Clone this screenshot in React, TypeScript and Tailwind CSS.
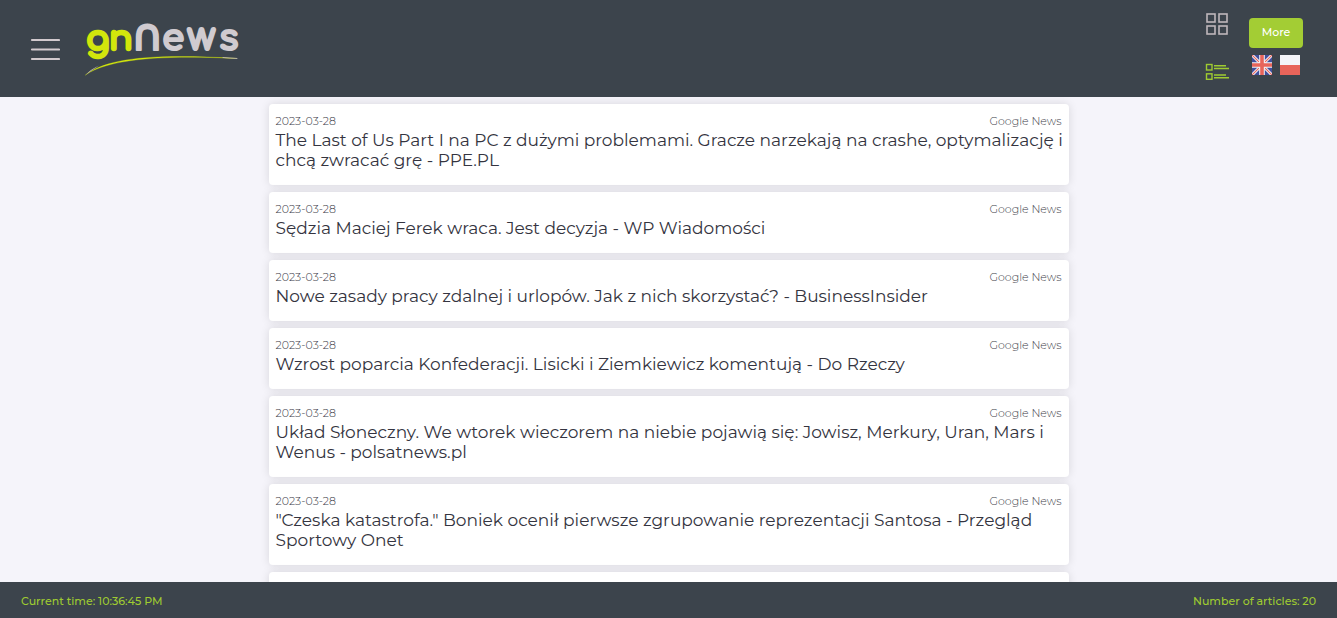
type Article = { date: string; title: string; source: string };

const articles: Article[] = [
  { date: "2023-03-28", source: "Google News", title: "The Last of Us Part I na PC z dużymi problemami. Gracze narzekają na crashe, optymalizację i chcą zwracać grę - PPE.PL" },
  { date: "2023-03-28", source: "Google News", title: "Sędzia Maciej Ferek wraca. Jest decyzja - WP Wiadomości" },
  { date: "2023-03-28", source: "Google News", title: "Nowe zasady pracy zdalnej i urlopów. Jak z nich skorzystać? - BusinessInsider" },
  { date: "2023-03-28", source: "Google News", title: "Wzrost poparcia Konfederacji. Lisicki i Ziemkiewicz komentują - Do Rzeczy" },
  { date: "2023-03-28", source: "Google News", title: "Układ Słoneczny. We wtorek wieczorem na niebie pojawią się: Jowisz, Merkury, Uran, Mars i Wenus - polsatnews.pl" },
  { date: "2023-03-28", source: "Google News", title: "\"Czeska katastrofa.\" Boniek ocenił pierwsze zgrupowanie reprezentacji Santosa - Przegląd Sportowy Onet" },
];

function MenuIcon() {
  return (
    <svg width="30" height="24" viewBox="0 0 30 24" fill="none" stroke="#d2cace" strokeWidth="2.2" strokeLinecap="round" aria-hidden="true">
      <path d="M2 2h27M2 11.5h27M2 21h27" />
    </svg>
  );
}

function Logo() {
  return (
    <svg width="156" height="77" viewBox="0 0 156 77" role="img" aria-label="gnNews" strokeLinejoin="round" strokeLinecap="round">
      <g fontFamily="Comfortaa, Montserrat, Inter, sans-serif" fontWeight="600">
        <g fill="#d2e60c" stroke="#d2e60c" strokeWidth="2.6">
          <text x="1" y="42" fontSize="35">g</text>
          <text x="24" y="42" fontSize="35">n</text>
        </g>
        <g fill="#d0cbd0" stroke="#d0cbd0" strokeWidth="2.2">
          <text x="46" y="42" fontSize="44" fontFamily="'DejaVu Sans', sans-serif" fontWeight="400">∩</text>
          <text x="77" y="42" fontSize="36">e</text>
          <text x="102" y="42" fontSize="39">w</text>
          <text x="134" y="42" fontSize="36">s</text>
        </g>
      </g>
      <path d="M0.5 67C20 51 65 45 152 50.5C70 46.5 22 52 0.5 67Z" fill="#d2e60c" stroke="#d2e60c" strokeWidth="0.3" />
      <path d="M0.5 67Q6 61 14 57.5Q7 62 0.5 67Z" fill="#c9bcc0" />
      <path d="M138 49.5l14 1" fill="none" stroke="#c9bcc0" strokeWidth="0.8" />
    </svg>
  );
}

function GridIcon() {
  return (
    <svg width="24" height="24" viewBox="0 0 24 24" fill="none" stroke="#bfb7bb" strokeWidth="1.6" aria-hidden="true">
      <rect x="2" y="2" width="8" height="8" />
      <rect x="14" y="2" width="8" height="8" />
      <rect x="2" y="14" width="8" height="8" />
      <rect x="14" y="14" width="8" height="8" />
    </svg>
  );
}

function ListIcon() {
  return (
    <svg width="24" height="18" viewBox="0 0 24 18" fill="none" stroke="#9fcb31" strokeWidth="1.4" aria-hidden="true">
      <rect x="1.5" y="1.5" width="5.5" height="5.5" />
      <rect x="1.5" y="10.8" width="5.5" height="5.5" />
      <path d="M9 2.8h12M9 5.5h15M9 12h12M9 14.8h15" />
    </svg>
  );
}

function BritishFlag() {
  return (
    <svg width="20" height="20" viewBox="0 0 20 20" aria-hidden="true">
      <rect width="20" height="20" fill="#414f9c" />
      <path d="M0 0L20 20M20 0L0 20" stroke="#f4f4f8" strokeWidth="3" />
      <path d="M0 0L20 20M20 0L0 20" stroke="#e8645a" strokeWidth="1.1" />
      <path d="M10 0V20M0 10H20" stroke="#f4f4f8" strokeWidth="5.6" />
      <path d="M10 0V20M0 10H20" stroke="#e8645a" strokeWidth="3.6" />
    </svg>
  );
}

function PolishFlag() {
  return (
    <svg width="20" height="20" viewBox="0 0 20 20" aria-hidden="true">
      <rect width="20" height="10" fill="#f4f4f8" />
      <rect y="10" width="20" height="10" fill="#e8645a" />
    </svg>
  );
}

function ArticleCard({ article }: { article: Article }) {
  return (
    <article className="rounded bg-white px-[7px] pt-2 pb-[15px] shadow-[0_0_10px_rgba(0,0,0,0.12)]">
      <div className="flex justify-between text-[11px] leading-[18px] font-light text-[#3c3c48]">
        <time>{article.date}</time>
        <span>{article.source}</span>
      </div>
      <h2 className="-mr-1 text-[17px] leading-5 text-[#343440]">{article.title}</h2>
    </article>
  );
}

export default function App() {
  return (
    <div className="flex h-screen flex-col overflow-hidden bg-[#f5f4fa] font-['Montserrat','Inter','Noto_Sans',sans-serif]">
      <header className="flex shrink-0 items-center justify-between bg-[#3c444c] pt-2 pr-[34px] pb-3 pl-[30px]">
        <div className="flex items-center gap-[25px]">
          <button type="button" aria-label="Open menu" className="pt-[7px]"><MenuIcon /></button>
          <a href="#" className="block"><Logo /></a>
        </div>
        <div className="flex items-center gap-5">
          <div className="flex flex-col gap-[27px]">
            <button type="button" aria-label="Grid view"><GridIcon /></button>
            <button type="button" aria-label="List view"><ListIcon /></button>
          </div>
          <div className="flex flex-col items-center gap-[7px]">
            <button type="button" className="h-[30px] w-[54px] rounded bg-[#a3cd34] pb-[2px] text-[11px] font-medium text-white">More</button>
            <div className="flex gap-2">
              <button type="button" aria-label="English"><BritishFlag /></button>
              <button type="button" aria-label="Polski"><PolishFlag /></button>
            </div>
          </div>
        </div>
      </header>
      <main className="min-h-0 flex-1 overflow-hidden">
        <div className="mx-auto flex max-w-[800px] flex-col gap-[7px] pt-[7px]">
          {articles.map((article) => (
            <ArticleCard key={article.title} article={article} />
          ))}
          <div className="h-[61px] rounded bg-white shadow-[0_0_10px_rgba(0,0,0,0.12)]" />
        </div>
      </main>
      <footer className="flex h-9 shrink-0 items-center justify-between bg-[#3c444c] px-[21px] pt-[3px] text-[11px] font-medium text-[#9fcb31]">
        <span>Current time: 10:36:45 PM</span>
        <span>Number of articles: 20</span>
      </footer>
    </div>
  );
}
